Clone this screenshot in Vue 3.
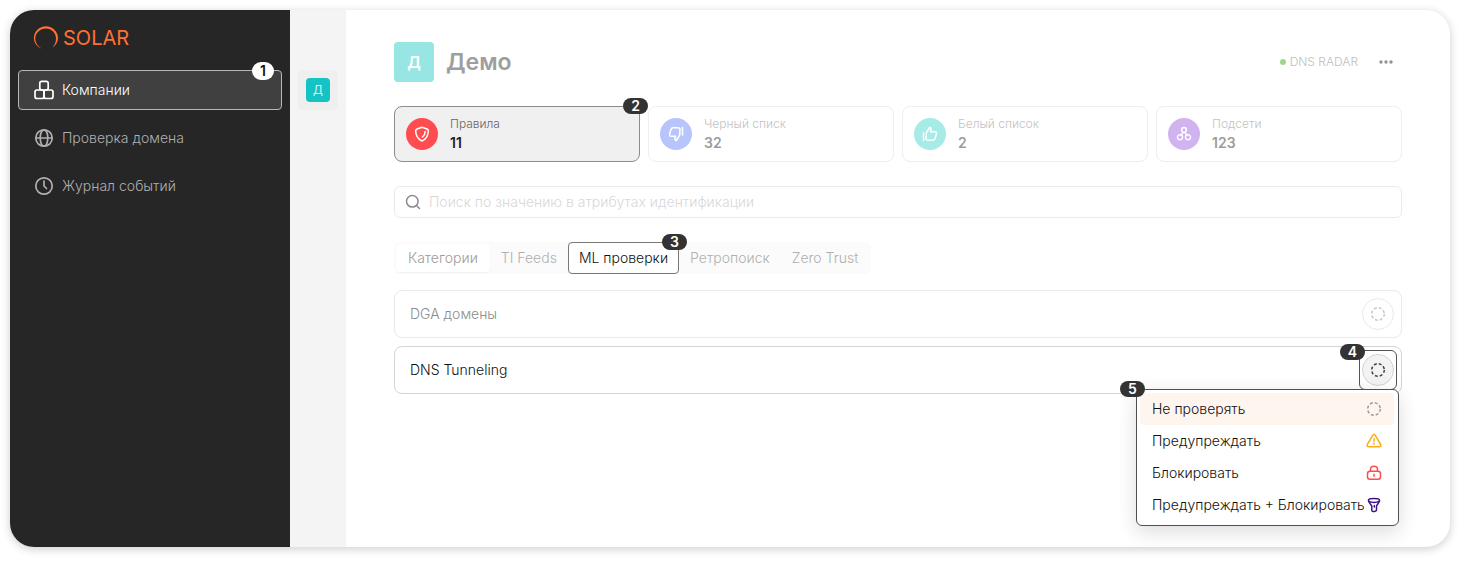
<template>
  <div class="app-window">
    <aside class="sidebar">
      <a href="#" class="logo">
        <svg width="26" height="26" viewBox="0 0 26 26">
          <path d="M8.500 23.500C3.600 21.500 .9 17.500.9 13C.9 6.500 6.300 1.200 12.900 1.200S25 6.500 25 12.800C25 17 22.700 20.800 19.300 22.500C21.900 20 23 17 23 13.600C23 7.900 18.600 3.400 12.900 3.400S2.300 7.900 2.300 13.300C2.300 17.800 4.700 21.200 8.500 23.500Z" fill="currentColor" />
        </svg>
        <span>SOLAR</span>
      </a>
      <nav class="nav">
        <a href="#" class="nav-item active">
          <svg class="nav-icon" viewBox="0 0 20 20">
            <rect x="5.800" y="1.300" width="8.400" height="8.700" rx="2" />
            <rect x="1" y="10" width="9" height="8.500" rx="2" />
            <rect x="10" y="10" width="9" height="8.500" rx="2" />
          </svg>
          Компании
          <span class="badge light">1</span>
        </a>
        <a href="#" class="nav-item">
          <svg class="nav-icon" viewBox="0 0 20 20">
            <circle cx="10" cy="10" r="8.200" />
            <ellipse cx="10" cy="10" rx="3.800" ry="8.200" />
            <path d="M2 10H18" />
          </svg>
          Проверка домена
        </a>
        <a href="#" class="nav-item">
          <svg class="nav-icon" viewBox="0 0 20 20">
            <circle cx="10" cy="10" r="8.200" />
            <path d="M10 5V10L12.500 12.500" />
          </svg>
          Журнал событий
        </a>
      </nav>
    </aside>

    <div class="rail">
      <button type="button" class="rail-item" aria-label="Демо"><span class="rail-avatar">Д</span></button>
    </div>

    <main class="content">
      <header class="header">
        <div class="avatar">Д</div>
        <h1>Демо</h1>
        <div class="status"><i class="dot"></i>DNS RADAR</div>
        <button type="button" class="more" aria-label="Меню">
          <svg width="16" height="16" viewBox="0 0 16 16" fill="currentColor">
            <circle cx="3" cy="8" r="1.700" />
            <circle cx="8" cy="8" r="1.700" />
            <circle cx="13" cy="8" r="1.700" />
          </svg>
        </button>
      </header>

      <section class="cards">
        <button v-for="card in cards" :key="card.title" type="button" class="card" :class="{ selected: card.selected }">
          <span class="card-icon" :class="card.color">
            <svg width="16" height="16" viewBox="0 0 16 16">
              <path v-for="d in card.paths" :key="d" :d="d" />
            </svg>
          </span>
          <span class="card-text">
            <span class="card-title">{{ card.title }}</span>
            <strong>{{ card.count }}</strong>
          </span>
          <span v-if="card.selected" class="badge corner">2</span>
        </button>
      </section>

      <label class="search">
        <svg width="16" height="16" viewBox="0 0 16 16">
          <circle cx="7.300" cy="7.300" r="5.800" />
          <path d="M11.500 11.500L14.500 14.500" />
        </svg>
        <input v-model="query" type="text" placeholder="Поиск по значению в атрибутах идентификации" aria-label="Поиск" />
      </label>

      <div class="tabs">
        <button
          v-for="tab in tabs"
          :key="tab.title"
          type="button"
          class="tab"
          :class="tab.state"
        >
          {{ tab.title }}
          <span v-if="tab.state === 'focused'" class="badge corner">3</span>
        </button>
      </div>

      <div class="rules">
        <div class="rule">
          <span>DGA домены</span>
          <button type="button" class="mode" aria-label="Не проверять">
            <svg width="16" height="16" viewBox="0 0 16 16"><circle class="dashed" cx="8" cy="8" r="6.300" /></svg>
          </button>
        </div>
        <div class="rule open">
          <span>DNS Tunneling</span>
          <div class="mode-frame">
            <button type="button" class="mode" aria-label="Выбрать режим">
              <svg width="16" height="16" viewBox="0 0 16 16"><circle class="dashed" cx="8" cy="8" r="6.300" /></svg>
            </button>
            <span class="badge">4</span>
          </div>
          <div class="menu">
            <span class="badge">5</span>
            <button type="button" class="menu-item current">
              Не проверять
              <svg class="gray" width="16" height="16" viewBox="0 0 16 16"><circle class="dashed" cx="8" cy="8" r="6.300" /></svg>
            </button>
            <button type="button" class="menu-item">
              Предупреждать
              <svg class="yellow" width="16" height="16" viewBox="0 0 16 16">
                <path d="M6.900 2.100Q8 .700 9.100 2.100L14.700 11.500Q15.500 13.800 13.300 13.800H2.700Q.500 13.800 1.300 11.500Z" />
                <path d="M8 5.800V8.300M8 10.300V11.300" />
              </svg>
            </button>
            <button type="button" class="menu-item">
              Блокировать
              <svg class="red" width="16" height="16" viewBox="0 0 16 16">
                <rect x="1.500" y="6.300" width="13" height="8" rx="2.500" />
                <path d="M4.500 6V4.500C4.500 2.700 6 1.300 8 1.300S11.500 2.700 11.500 4.500V6M8 9.300V11.300" />
              </svg>
            </button>
            <button type="button" class="menu-item">
              Предупреждать + Блокировать
              <svg class="violet" width="16" height="16" viewBox="0 0 16 16">
                <path d="M2.400 3.200C2.400 .9 13.600 .9 13.600 3.200C13.600 5.300 11.300 7 10.500 9V13C10.500 14.600 6 15.200 5.800 13.500V9C4.700 7 2.400 5.300 2.400 3.200Z" />
                <path d="M3 4.400C5.500 5.700 10.500 5.700 13 4.400M8.300 8.500V10" />
              </svg>
            </button>
          </div>
        </div>
      </div>
    </main>
  </div>
</template>

<script setup>
import { ref } from 'vue'

const query = ref('')

const cards = [
  {
    title: 'Правила',
    count: 11,
    color: 'red-bg',
    selected: true,
    paths: [
      'M8 1.200L13 3Q14.300 3.500 14.300 5C14.300 10 12.500 12.800 8 15C3.500 12.800 1.700 10 1.700 5Q1.700 3.500 3 3Z',
      'M11.200 5.500C11.200 8.300 10.200 9.700 8.500 11'
    ]
  },
  {
    title: 'Черный списк',
    count: 32,
    color: 'blue-bg',
    paths: [
      'M12 2.500L11.700 9L9 13.500C8.500 15.200 6.800 14.500 7 13L7.500 10.200H3.200C1.800 10.200 1.300 9.300 1.600 8L3 3.500Q3.500 1.800 5.500 1.800H9.500Q11 1.800 12 2.500Z',
      'M14.500 1.500V9'
    ]
  },
  {
    title: 'Белый список',
    count: 2,
    color: 'teal-bg',
    paths: [
      'M4 13.500L4.300 7L7 2.500C7.500.800 9.200 1.500 9 3L8.500 5.800H12.800C14.200 5.800 14.700 6.700 14.400 8L13 12.500Q12.500 14.200 10.500 14.200H6.500Q5 14.200 4 13.500Z',
      'M1.500 14.500V7'
    ]
  },
  {
    title: 'Подсети',
    count: 123,
    color: 'purple-bg',
    paths: [
      'M8 1.600A2.400 2.400 0 1 1 8 6.400A2.400 2.400 0 1 1 8 1.600Z',
      'M4 8.800A2.500 2.500 0 1 1 4 13.800A2.500 2.500 0 1 1 4 8.800Z',
      'M12 8.800A2.500 2.500 0 1 1 12 13.800A2.500 2.500 0 1 1 12 8.800Z',
      'M7 6.300L5.300 9M9 6.300L10.700 9'
    ]
  }
]

const tabs = [
  { title: 'Категории', state: 'picked' },
  { title: 'TI Feeds', state: '' },
  { title: 'ML проверки', state: 'focused' },
  { title: 'Ретропоиск', state: '' },
  { title: 'Zero Trust', state: '' }
]
</script>

<style>
body {
  background: #fff;
}
</style>

<style scoped>
* {
  box-sizing: border-box;
}

.app-window {
  display: flex;
  min-height: calc(100vh - 24px);
  margin: 10px 14px 14px 10px;
  border-radius: 24px;
  background: #fff;
  box-shadow: 0 2px 10px rgba(0, 0, 0, 0.2);
  font-family: Inter, "Liberation Sans", sans-serif;
  font-size: 14px;
  font-weight: 300;
  line-height: 20px;
}

svg {
  flex: none;
  fill: none;
  stroke: currentColor;
  stroke-width: 1.5;
  stroke-linecap: round;
  stroke-linejoin: round;
}

button {
  position: relative;
  margin: 0;
  padding: 0;
  border: none;
  background: none;
  color: inherit;
  font: inherit;
  text-align: left;
  cursor: pointer;
}

a {
  color: inherit;
  text-decoration: none;
}

.badge {
  position: absolute;
  z-index: 3;
  width: 25px;
  height: 16px;
  border-radius: 8px;
  background: #333;
  color: #fff;
  font-size: 14px;
  font-weight: 600;
  line-height: 16px;
  text-align: center;
}

.badge.corner {
  top: -9px;
  right: -9px;
}

.badge.light {
  top: -9px;
  right: 7px;
  width: 22px;
  height: 18px;
  border-radius: 9px;
  background: #fff;
  color: #111;
  line-height: 18px;
}

/* Sidebar */
.sidebar {
  flex: none;
  width: 280px;
  padding: 16px 8px;
  border-radius: 24px 0 0 24px;
  background: #262626;
  color: #b0b0b0;
}

.logo {
  display: flex;
  align-items: center;
  gap: 4px;
  height: 24px;
  padding-left: 15px;
  color: #ff7034;
  font-size: 20px;
  font-weight: 400;
}

.logo svg {
  stroke: none;
}

.nav {
  display: flex;
  flex-direction: column;
  gap: 8px;
  margin-top: 20px;
}

.nav-item {
  position: relative;
  display: flex;
  align-items: center;
  gap: 8px;
  height: 40px;
  padding: 0 15px;
  border: 1px solid transparent;
  border-radius: 4px;
}

.nav-item.active {
  border-color: #b8b8b8;
  background: #404040;
  color: #fff;
}

.nav-icon {
  width: 20px;
  height: 20px;
  stroke-width: 1.7;
}

/* Company rail */
.rail {
  flex: none;
  width: 56px;
  padding: 60px 8px;
  background: #f4f4f4;
}

.rail-item {
  display: flex;
  align-items: center;
  justify-content: center;
  width: 40px;
  height: 40px;
  border-radius: 4px;
  background: #efefef;
}

.rail-avatar {
  width: 24px;
  height: 24px;
  border-radius: 4px;
  background: #14c4c4;
  color: #fff;
  font-size: 12px;
  line-height: 24px;
  text-align: center;
}

/* Content */
.content {
  flex: 1;
  min-width: 0;
  padding: 32px 48px;
}

.header {
  display: flex;
  align-items: center;
  height: 40px;
}

.avatar {
  width: 40px;
  height: 40px;
  border-radius: 4px;
  background: #98e6e4;
  color: #fff;
  font-size: 16px;
  font-weight: 600;
  line-height: 40px;
  text-align: center;
}

h1 {
  margin: 0 auto 0 12px;
  color: #9e9e9e;
  font-size: 23px;
  font-weight: 600;
  line-height: 32px;
}

.status {
  display: flex;
  align-items: center;
  gap: 4px;
  margin-right: 20px;
  color: #bebebe;
  font-size: 12px;
}

.dot {
  width: 6px;
  height: 6px;
  border-radius: 50%;
  background: #a0d68c;
}

.more {
  width: 16px;
  height: 16px;
  margin-right: 8px;
  color: #939393;
}

.more svg {
  display: block;
  fill: currentColor;
  stroke: none;
}

.cards {
  display: grid;
  grid-template-columns: repeat(4, 1fr);
  gap: 8px;
  margin-top: 24px;
}

.card {
  display: flex;
  align-items: center;
  gap: 12px;
  height: 56px;
  padding: 0 11px;
  border: 1px solid #eee;
  border-radius: 8px;
  color: #9c9c9c;
}

.card.selected {
  border-color: #8c8c8c;
  background: #f0f0f0;
  color: #222;
}

.card-icon {
  display: flex;
  align-items: center;
  justify-content: center;
  width: 32px;
  height: 32px;
  border-radius: 50%;
  color: #fff;
}

.red-bg {
  background: #ff4d4f;
}

.blue-bg {
  background: #b7c5fc;
}

.teal-bg {
  background: #a7ebe6;
}

.purple-bg {
  background: #d1b3f0;
}

.card-text {
  display: flex;
  flex-direction: column;
}

.card-title {
  color: #c3c3c3;
  font-size: 12px;
  line-height: 18px;
}

.selected .card-title {
  color: #666;
}

.card strong {
  font-weight: 600;
}

.search {
  display: flex;
  align-items: center;
  gap: 8px;
  height: 32px;
  margin-top: 24px;
  padding: 0 10px;
  border: 1px solid #eaeaea;
  border-radius: 6px;
  color: #8c8c8c;
}

.search input {
  flex: 1;
  min-width: 0;
  padding: 0;
  border: none;
  outline: none;
  background: none;
  color: #333;
  font: inherit;
}

.search input::placeholder {
  color: #d8d8d8;
  opacity: 1;
}

.tabs {
  display: flex;
  width: fit-content;
  height: 32px;
  margin-top: 24px;
  padding: 0 2px;
  border-radius: 6px;
  background: #fbfbfb;
}

.tab {
  padding: 0 10px;
  border: 1px solid transparent;
  border-radius: 4px;
  color: #b0b0b0;
  white-space: nowrap;
}

.tab.picked {
  height: 28px;
  margin: 2px 0;
  padding: 0 11px;
  background: #fff;
  box-shadow: 0 1px 2px rgba(0, 0, 0, 0.04);
  color: #9c9c9c;
}

.tab.focused {
  border-color: #777;
  background: #fff;
  color: #111;
}

.rules {
  display: flex;
  flex-direction: column;
  gap: 8px;
  margin-top: 16px;
}

.rule {
  position: relative;
  display: flex;
  align-items: center;
  justify-content: space-between;
  height: 48px;
  padding: 0 7px 0 15px;
  border: 1px solid #eaeaea;
  border-radius: 8px;
  color: #8c8c8c;
}

.rule.open {
  padding-right: 4px;
  border-color: #d4d4d4;
  color: #111;
}

.mode {
  display: flex;
  align-items: center;
  justify-content: center;
  width: 32px;
  height: 32px;
  border: 1px solid #eaeaea;
  border-radius: 50%;
  color: #c8c8c8;
}

.mode-frame {
  position: relative;
  padding: 3px 2px;
  border: 1px solid #555;
  border-radius: 6px;
}

.mode-frame .mode {
  border-color: #d4d4d4;
  background: #f3f3f3;
  color: #444;
}

.mode-frame .badge {
  top: -7px;
  left: -20px;
}

.dashed {
  stroke-dasharray: 2.9 2.05;
  stroke-linecap: butt;
}

.menu {
  position: absolute;
  z-index: 2;
  top: 42px;
  right: 2px;
  width: 263px;
  padding: 3px 4px 4px 3px;
  border: 1px solid #505050;
  border-radius: 6px;
  background: #fff;
  box-shadow: 0 6px 20px rgba(0, 0, 0, 0.14);
}

.menu .badge {
  top: -9px;
  left: -17px;
}

.menu-item {
  display: flex;
  align-items: center;
  justify-content: space-between;
  width: 100%;
  height: 32px;
  padding: 0 12px;
  border-radius: 4px;
  white-space: nowrap;
}

.menu-item.current {
  background: #fff5ef;
}

.gray {
  color: #a09a97;
}

.yellow {
  color: #faad14;
}

.red {
  color: #ff4d4f;
}

.violet {
  color: #3c108c;
}
</style>
